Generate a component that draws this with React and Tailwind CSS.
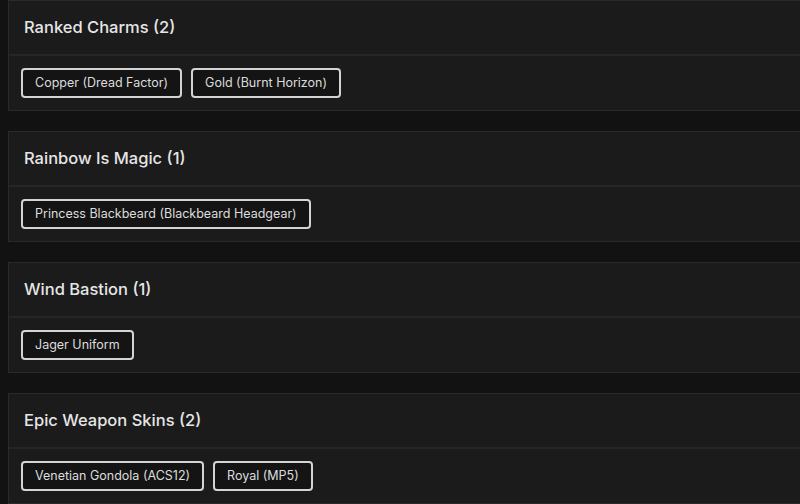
import React from 'react';

const groups = [
    { title: 'Ranked Charms (2)', items: ['Copper (Dread Factor)', 'Gold (Burnt Horizon)'] },
    { title: 'Rainbow Is Magic (1)', items: ['Princess Blackbeard (Blackbeard Headgear)'] },
    { title: 'Wind Bastion (1)', items: ['Jager Uniform'] },
    { title: 'Epic Weapon Skins (2)', items: ['Venetian Gondola (ACS12)', 'Royal (MP5)'] },
];

export default function App() {
    return (
        <div className="h-[504px] w-[800px] overflow-hidden bg-[#121212] pl-2 font-['Inter','Liberation_Sans',sans-serif]">
            <div className="flex w-[820px] flex-col gap-[20px]">
                {groups.map(g => (
                    <div key={g.title} className="border border-[#2a2a2a] bg-[#1b1b1b]">
                        <div className="flex h-[55px] items-center border-b-2 border-[#262626] pl-[15px] text-[16.5px] font-medium text-[#e6e6e6]">
                            {g.title}
                        </div>
                        <div className="flex h-[54px] items-center gap-[9px] px-3">
                            {g.items.map(it => (
                                <span
                                    key={it}
                                    className="flex h-[30px] items-center rounded-[4px] border-2 border-[#d4d4d4] bg-[#141414] px-3 text-[12.5px] text-[#dcdcdc]"
                                >
                                    {it}
                                </span>
                            ))}
                        </div>
                    </div>
                ))}
            </div>
        </div>
    );
}
